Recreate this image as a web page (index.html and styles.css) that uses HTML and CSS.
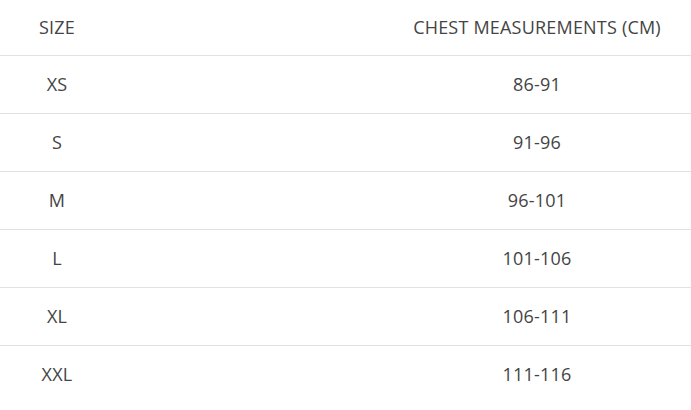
FILE: index.html
```html
<!DOCTYPE html>
<html>
<head>
<meta charset="utf-8">
<link rel="stylesheet" href="styles.css">
</head>
<body>
<div class="table">
  <div class="row head"><div class="c1">SIZE</div><div class="c2">CHEST MEASUREMENTS (CM)</div></div>
  <div class="row"><div class="c1">XS</div><div class="c2">86-91</div></div>
  <div class="row"><div class="c1">S</div><div class="c2">91-96</div></div>
  <div class="row"><div class="c1">M</div><div class="c2">96-101</div></div>
  <div class="row"><div class="c1">L</div><div class="c2">101-106</div></div>
  <div class="row"><div class="c1">XL</div><div class="c2">106-111</div></div>
  <div class="row last"><div class="c1">XXL</div><div class="c2">111-116</div></div>
</div>
</body>
</html>
```
FILE: styles.css
```css
html, body { margin: 0; padding: 0; background: #fff; }
body { font-family: "Open Sans", sans-serif; font-size: 18px; letter-spacing: 0.2px; color: #444; }
.table { width: 691px; }
.row { display: flex; justify-content: space-between; align-items: center; height: 57px; padding-bottom: 1px; box-sizing: content-box; border-bottom: 1px solid #e1e1e1; }
.row > div { line-height: 24px; }
.row { height: 56px; }
.row.head { height: 54px; }
.row.last { border-bottom: none; }
.c1 { width: 114px; text-align: center; }
.c2 { width: 308px; text-align: center; }
```
